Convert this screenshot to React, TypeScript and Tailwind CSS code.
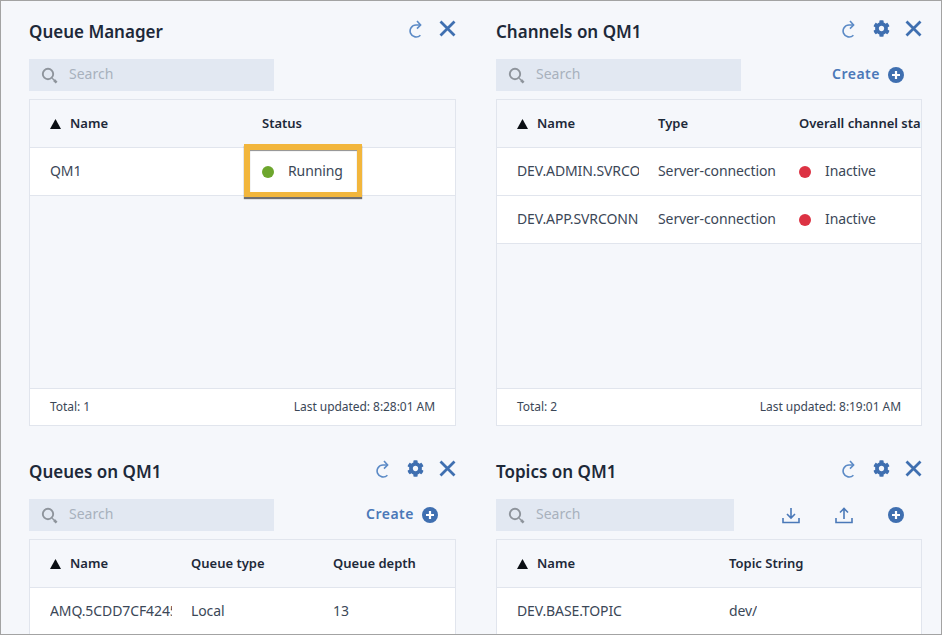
import React from "react";
import { FaCog } from "react-icons/fa";

// small drawn icons
const RefreshIcon = () => (
  <svg width="14" height="18" viewBox="0 0 14 18" fill="none" stroke="#5b8ac6" strokeWidth="1.6">
    <path d="M11.4 15.2A6 6 0 1 1 7 5H11" />
    <path d="M8 1 11.6 5 8 8.6" />
  </svg>
);

const CloseIcon = () => (
  <svg width="17" height="17" viewBox="0 0 17 17" fill="none" stroke="#3f6fb0" strokeWidth="2.8">
    <path d="M1.5 1.5 15.5 15.5M15.5 1.5 1.5 15.5" />
  </svg>
);

const SearchIcon = () => (
  <svg width="17" height="17" viewBox="0 0 17 17" fill="none" stroke="#8e949c">
    <circle cx="7" cy="7" r="5.2" strokeWidth="1.9" />
    <path d="M11.2 11.2 13 13" strokeWidth="1.4" />
    <path d="M13 13 15.6 15.6" strokeWidth="2.6" />
  </svg>
);

const PlusCircle = () => (
  <svg width="16" height="16" viewBox="0 0 16 16">
    <circle cx="8" cy="8" r="8" fill="#3f6fb0" />
    <path d="M8 4V12M4 8H12" stroke="#fff" strokeWidth="2.2" />
  </svg>
);

const DownloadIcon = () => (
  <svg width="18" height="17" viewBox="0 0 18 17" fill="none" stroke="#4a78b8" strokeWidth="1.6">
    <path d="M9 1V10.5M5 7 9 11 13 7" />
    <path d="M1 11V15.5H17V11" />
  </svg>
);

const UploadIcon = () => (
  <svg width="18" height="17" viewBox="0 0 18 17" fill="none" stroke="#4a78b8" strokeWidth="1.6">
    <path d="M9 12V2M5 5.5 9 1.5 13 5.5" />
    <path d="M1 11V15.5H17V11" />
  </svg>
);

const SortArrow = () => (
  <svg width="11" height="10" viewBox="0 0 11 10" className="shrink-0">
    <path d="M5.5 0 11 10H0Z" fill="#0b0f14" />
  </svg>
);

interface Column {
  label: string;
  width: string;
}

interface Cell {
  text: string;
  dot?: "green" | "red";
  highlight?: boolean;
}

interface PanelProps {
  title: string;
  gear?: boolean;
  searchWidth: string;
  actions?: React.ReactNode;
  columns: Column[];
  rows: Cell[][];
  total: number;
  updated: string;
}

const CreateButton = () => (
  <div className="flex items-center gap-2 pr-[18px]">
    <span className="-mt-[2px] text-sm font-semibold tracking-[0.5px] text-[#4a78b8]">Create</span>
    <PlusCircle />
  </div>
);

const Panel = ({ title, gear, searchWidth, actions, columns, rows, total, updated }: PanelProps) => (
  <section className="flex flex-col">
    <div className="flex h-6 items-center justify-between">
      <h2 className="pt-[2px] text-[17px] font-semibold text-[#1d2939]">{title}</h2>
      <div className="-mt-[5px] flex items-center gap-[16px]">
        <RefreshIcon />
        {gear && <FaCog className="translate-x-px text-[#3f6fb0]" size={17} />}
        <CloseIcon />
      </div>
    </div>
    <div className="mt-4 flex h-8 items-center justify-between">
      <label className={`flex h-8 items-center gap-[11px] bg-[#e2e8f2] pl-3 ${searchWidth}`}>
        <SearchIcon />
        <input
          placeholder="Search"
          className="-mt-[2px] w-24 bg-transparent text-sm outline-none placeholder:text-[#a8b1bd]"
        />
      </label>
      {actions}
    </div>
    <div className="mt-2 flex h-[327px] flex-col overflow-hidden border border-[#e1e5ed]">
      <div className="flex h-12 shrink-0 items-center border-b border-[#e1e5ed] pl-5 text-[13px] font-semibold text-[#1d2939]">
        {columns.map((column, i) => (
          <div key={column.label} className={`flex shrink-0 items-center gap-[9px] whitespace-nowrap ${column.width}`}>
            {i === 0 && <SortArrow />}
            {column.label}
          </div>
        ))}
      </div>
      {rows.map((row, r) => (
        <div
          key={r}
          className="flex h-12 shrink-0 items-center border-b border-[#e1e5ed] bg-white pl-5 text-sm tracking-[-0.1px] text-[#3b4757]"
        >
          {row.map((cell, c) => (
            <div key={c} className={`relative flex h-5 shrink-0 items-center pr-[19px] ${columns[c].width}`}>
              {cell.dot && (
                <span
                  className={`mr-[14px] h-3 w-3 shrink-0 rounded-full ${
                    cell.dot === "green" ? "bg-[#6da62d]" : "bg-[#dc3243]"
                  }`}
                />
              )}
              <div className="-mt-[2px] overflow-hidden whitespace-nowrap">{cell.text}</div>
              {cell.highlight && (
                <div className="absolute -left-[18px] -top-[18px] h-[53px] w-[118px] border-[5px] border-l-[6px] border-t-[6px] border-[#f2b63c] shadow-[0_2px_1px_rgba(0,0,0,0.55),inset_0_1px_1px_rgba(0,0,0,0.45)]" />
              )}
            </div>
          ))}
        </div>
      ))}
      <div className="mt-auto flex h-[37px] shrink-0 items-center justify-between border-t border-[#e1e5ed] bg-white px-5 text-xs tracking-[-0.05px] text-[#3b4757]">
        <span>Total: {total}</span>
        <span>Last updated: {updated}</span>
      </div>
    </div>
  </section>
);

export default function App() {
  return (
    <div
      className="grid h-[635px] grid-cols-[427px_426px] content-start gap-x-10 gap-y-[33px] overflow-hidden border border-[#a3a3a3] bg-[#f5f7fb] pl-[28px] pt-[18px]"
      style={{ fontFamily: '"Noto Sans", sans-serif' }}
    >
      <Panel
        title="Queue Manager"
        searchWidth="w-[245px]"
        columns={[
          { label: "Name", width: "w-[212px]" },
          { label: "Status", width: "w-[212px]" },
        ]}
        rows={[[{ text: "QM1" }, { text: "Running", dot: "green", highlight: true }]]}
        total={1}
        updated="8:28:01 AM"
      />
      <Panel
        title="Channels on QM1"
        gear
        searchWidth="w-[245px]"
        actions={<CreateButton />}
        columns={[
          { label: "Name", width: "w-[141px]" },
          { label: "Type", width: "w-[141px]" },
          { label: "Overall channel status", width: "w-[200px]" },
        ]}
        rows={[
          [{ text: "DEV.ADMIN.SVRCONN" }, { text: "Server-connection" }, { text: "Inactive", dot: "red" }],
          [{ text: "DEV.APP.SVRCONN" }, { text: "Server-connection" }, { text: "Inactive", dot: "red" }],
        ]}
        total={2}
        updated="8:19:01 AM"
      />
      <Panel
        title="Queues on QM1"
        gear
        searchWidth="w-[245px]"
        actions={<CreateButton />}
        columns={[
          { label: "Name", width: "w-[141px]" },
          { label: "Queue type", width: "w-[142px]" },
          { label: "Queue depth", width: "w-[141px]" },
        ]}
        rows={[[{ text: "AMQ.5CDD7CF42451" }, { text: "Local" }, { text: "13" }]]}
        total={1}
        updated="8:28:01 AM"
      />
      <Panel
        title="Topics on QM1"
        gear
        searchWidth="w-[238px]"
        actions={
          <div className="flex items-center gap-[35px] pr-[18px]">
            <DownloadIcon />
            <UploadIcon />
            <PlusCircle />
          </div>
        }
        columns={[
          { label: "Name", width: "w-[212px]" },
          { label: "Topic String", width: "w-[212px]" },
        ]}
        rows={[[{ text: "DEV.BASE.TOPIC" }, { text: "dev/" }]]}
        total={1}
        updated="8:19:01 AM"
      />
    </div>
  );
}
